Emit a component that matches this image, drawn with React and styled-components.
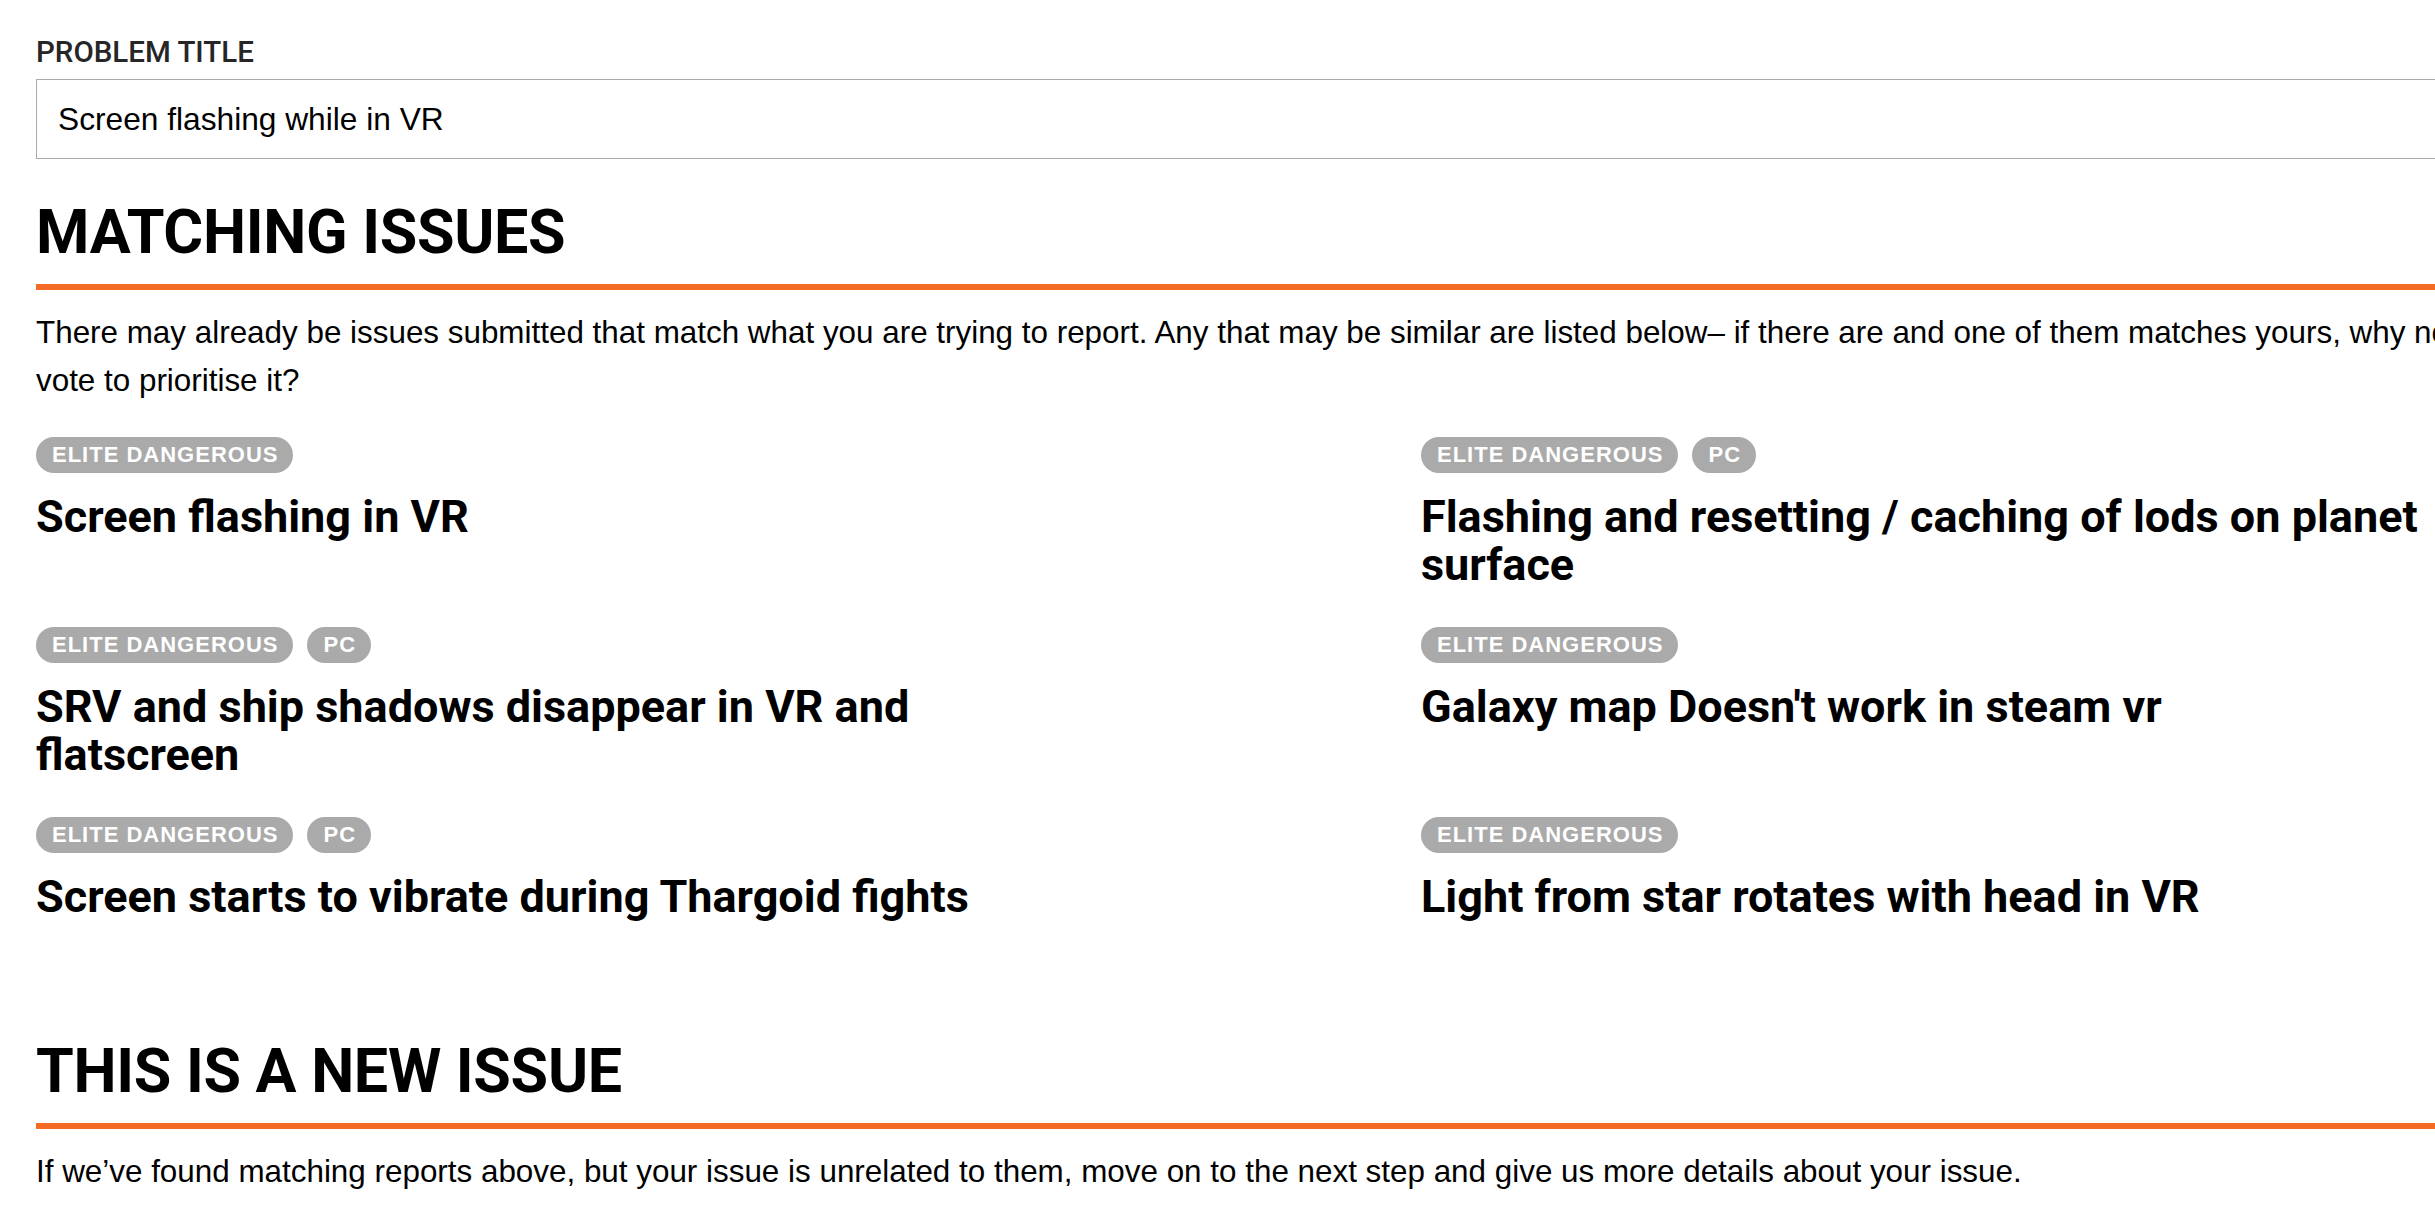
import styled, { createGlobalStyle } from "styled-components";

const GlobalStyle = createGlobalStyle`
  html, body {
    margin: 0;
    padding: 0;
    background: #fff;
    overflow: hidden;
  }
`;

const issues = [
  { title: "Screen flashing in VR", tags: ["Elite Dangerous"] },
  {
    title: "Flashing and resetting / caching of lods on planet surface",
    tags: ["Elite Dangerous", "PC"],
  },
  {
    title: "SRV and ship shadows disappear in VR and flatscreen",
    tags: ["Elite Dangerous", "PC"],
  },
  { title: "Galaxy map Doesn't work in steam vr", tags: ["Elite Dangerous"] },
  {
    title: "Screen starts to vibrate during Thargoid fights",
    tags: ["Elite Dangerous", "PC"],
  },
  { title: "Light from star rotates with head in VR", tags: ["Elite Dangerous"] },
];

function IssueCard({ issue }) {
  return (
    <Card>
      <TagList>
        {issue.tags.map((t) => (
          <Tag key={t}>{t}</Tag>
        ))}
      </TagList>
      <IssueTitle>{issue.title}</IssueTitle>
    </Card>
  );
}

export default function App() {
  return (
    <Page>
      <GlobalStyle />
      <Field>
        <Label>Problem Title</Label>
        <TextInput type="text" defaultValue="Screen flashing while in VR" />
      </Field>

      <SectionHeading>Matching Issues</SectionHeading>
      <Intro>
        There may already be issues submitted that match what you are trying to
        report. Any that may be similar are listed below– if there are and one
        of them matches yours, why not vote to prioritise it?
      </Intro>
      <IssueGrid>
        {issues.map((issue) => (
          <IssueCard key={issue.title} issue={issue} />
        ))}
      </IssueGrid>

      <SectionHeading>This is a new issue</SectionHeading>
      <Intro>
        If we’ve found matching reports above, but your issue is unrelated to
        them, move on to the next step and give us more details about your
        issue.
      </Intro>
    </Page>
  );
}

const Page = styled.div`
  width: 2470px;
  padding: 38px 0 0 36px;
  color: #000;
`;

const Field = styled.div`
  display: flex;
  flex-direction: column;
  gap: 12px;
`;

const Label = styled.label`
  font-family: Roboto, "Liberation Sans", sans-serif;
  font-weight: 500;
  font-size: 29.5px;
  line-height: 29px;
  text-transform: uppercase;
  color: #262626;
`;

const TextInput = styled.input`
  box-sizing: border-box;
  width: 100%;
  height: 80px;
  margin: 0;
  padding: 0 21px;
  border: 1px solid #ababab;
  border-radius: 0;
  background: #fff;
  outline: none;
  font-family: "Liberation Sans", Arial, sans-serif;
  font-size: 31.7px;
  color: #000;
`;

const SectionHeading = styled.h2`
  margin: 43px 0 0;
  padding-bottom: 21px;
  border-bottom: 6px solid #f36b25;
  font-family: Roboto, "Liberation Sans", sans-serif;
  font-weight: 700;
  font-size: 61px;
  line-height: 61px;
  letter-spacing: -0.3px;
  text-transform: uppercase;
`;

const Intro = styled.p`
  margin: 19px 0 0;
  font-family: "Liberation Sans", Arial, sans-serif;
  font-size: 31.4px;
  line-height: 48px;
`;

const IssueGrid = styled.div`
  display: grid;
  grid-template-columns: 1100px 1100px;
  column-gap: 285px;
  row-gap: 38px;
  margin: 32px 0 120px;
`;

const Card = styled.div`
  display: flex;
  flex-direction: column;
  gap: 20px;
`;

const TagList = styled.div`
  display: flex;
  gap: 14px;
`;

const Tag = styled.span`
  display: inline-flex;
  align-items: center;
  height: 36px;
  padding: 0 15px 0 16px;
  border-radius: 18px;
  background: #aaaaaa;
  color: #fff;
  font-family: "Liberation Sans", Arial, sans-serif;
  font-weight: 700;
  font-size: 22px;
  letter-spacing: 1px;
  text-transform: uppercase;
`;

const IssueTitle = styled.h3`
  max-width: 1040px;
  margin: 0;
  font-family: Roboto, "Liberation Sans", sans-serif;
  font-weight: 700;
  font-size: 45px;
  line-height: 48px;
`;
